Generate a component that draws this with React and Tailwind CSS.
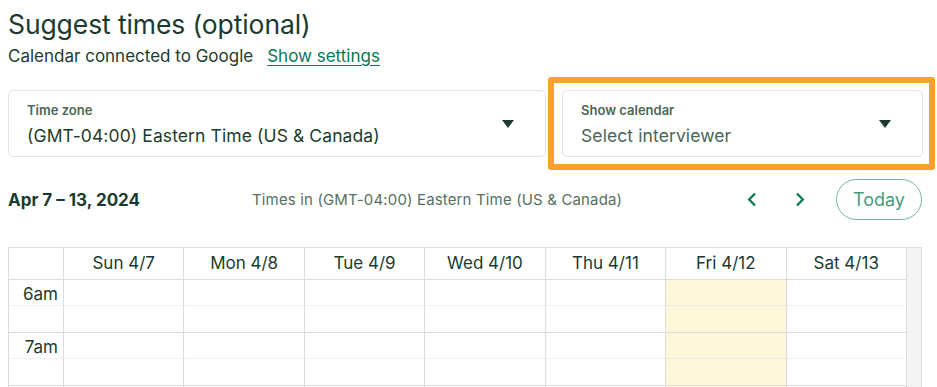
import React from 'react';

const days = ['Sun 4/7', 'Mon 4/8', 'Tue 4/9', 'Wed 4/10', 'Thu 4/11', 'Fri 4/12', 'Sat 4/13'];
const hours = ['6am', '7am', ''];

function Caret() {
  return (
    <svg width="12" height="8" viewBox="0 0 12 8" className="shrink-0">
      <path d="M0 0 H12 L6 8 Z" fill="#1c3b30" />
    </svg>
  );
}

function SelectBox({ label, value, width, muted }) {
  return (
    <div className={`${width} h-[67px] border border-[#e3e3e3] rounded-[5px] flex items-center pl-[18px] pr-[31px] shrink-0`}>
      <div className="flex-1 pt-[2px]">
        <div className="text-[13px] font-semibold text-[#4d6659] leading-[16px]">{label}</div>
        <div className={`text-[17.5px] leading-[22px] mt-[7px] tracking-[0.1px] ${muted ? 'text-[#4a6458]' : 'text-[#1c3b30]'}`}>{value}</div>
      </div>
      <Caret />
    </div>
  );
}

export default function App() {
  return (
    <div className="w-[937px] h-[387px] overflow-hidden bg-white relative font-['Inter',sans-serif] text-[#1c3b30]">
      {/* Heading */}
      <div className="pl-2 pt-[7px]">
        <h1 className="text-[26.5px] leading-[34px] font-normal tracking-[-0.1px]">Suggest times (optional)</h1>
        <p className="text-[17px] leading-[24px] mt-[3px]">
          Calendar connected to Google
          <a href="#" className="ml-[14px] text-[#047957] underline underline-offset-[3px]">Show settings</a>
        </p>
      </div>

      {/* Selects */}
      <div className="flex gap-4 pl-2 mt-[22px]">
        <SelectBox label="Time zone" value="(GMT-04:00) Eastern Time (US & Canada)" width="w-[538px]" />
        <SelectBox label="Show calendar" value="Select interviewer" width="w-[361px]" muted />
      </div>
      <div className="absolute left-[548px] top-[77px] w-[387px] h-[93px] border-[6px] border-[#f8a12f] rounded-[3px] pointer-events-none" />

      {/* Week header */}
      <div className="flex items-center pl-2 pr-[15px] mt-[22px] h-[41px]">
        <div className="w-[244px] text-[17px] font-bold pt-[2px]">Apr 7 – 13, 2024</div>
        <div className="text-[15px] tracking-[0.15px] text-[#56705f] pt-[2px]">Times in (GMT-04:00) Eastern Time (US &amp; Canada)</div>
        <div className="flex-1" />
        <div className="flex items-center gap-[38px] mr-[31px]">
          <svg width="10" height="15" viewBox="0 0 10 15"><path d="M8 1.5 L2.2 7.5 L8 13.5" fill="none" stroke="#047957" strokeWidth="2.3" /></svg>
          <svg width="10" height="15" viewBox="0 0 10 15"><path d="M2 1.5 L7.8 7.5 L2 13.5" fill="none" stroke="#047957" strokeWidth="2.3" /></svg>
        </div>
        <button className="w-[86px] h-[41px] rounded-full border border-[#76b39c] text-[18px] text-[#4c9a7c]">Today</button>
      </div>

      {/* Calendar grid */}
      <div className="ml-2 mt-[27px] w-[914px] border-t border-l border-r border-[#dddddd] flex">
        <div className="w-[898px]">
          <div className="flex h-[32px] border-b border-[#dddddd]">
            <div className="w-[55px] border-r border-[#dddddd]" />
            {days.map((d) => (
              <div key={d} className="flex-1 border-r border-[#dddddd] flex items-center justify-center text-[17px]">{d}</div>
            ))}
          </div>
          <div className="flex">
            <div className="w-[55px] border-r border-[#dddddd]">
              {hours.map((h, i) => (
                <div key={i} className="h-[53px] border-b border-[#dddddd]">
                  <div className="h-[26px] border-b border-dotted border-[#e4e4e4] text-right pr-[5px] text-[17px] leading-[26px] pt-[1px]">{h}</div>
                </div>
              ))}
            </div>
            {days.map((d, i) => (
              <div key={d} className={`flex-1 border-r border-[#dddddd] ${i === 5 ? 'bg-[#fdf7dc]' : ''}`}>
                {hours.map((h, j) => (
                  <div key={j} className="h-[53px] border-b border-[#dddddd]">
                    <div className="h-[26px] border-b border-dotted border-[#e4e4e4]" />
                  </div>
                ))}
              </div>
            ))}
          </div>
        </div>
        <div className="flex-1 bg-[#f4f4f4]" />
      </div>
    </div>
  );
}
